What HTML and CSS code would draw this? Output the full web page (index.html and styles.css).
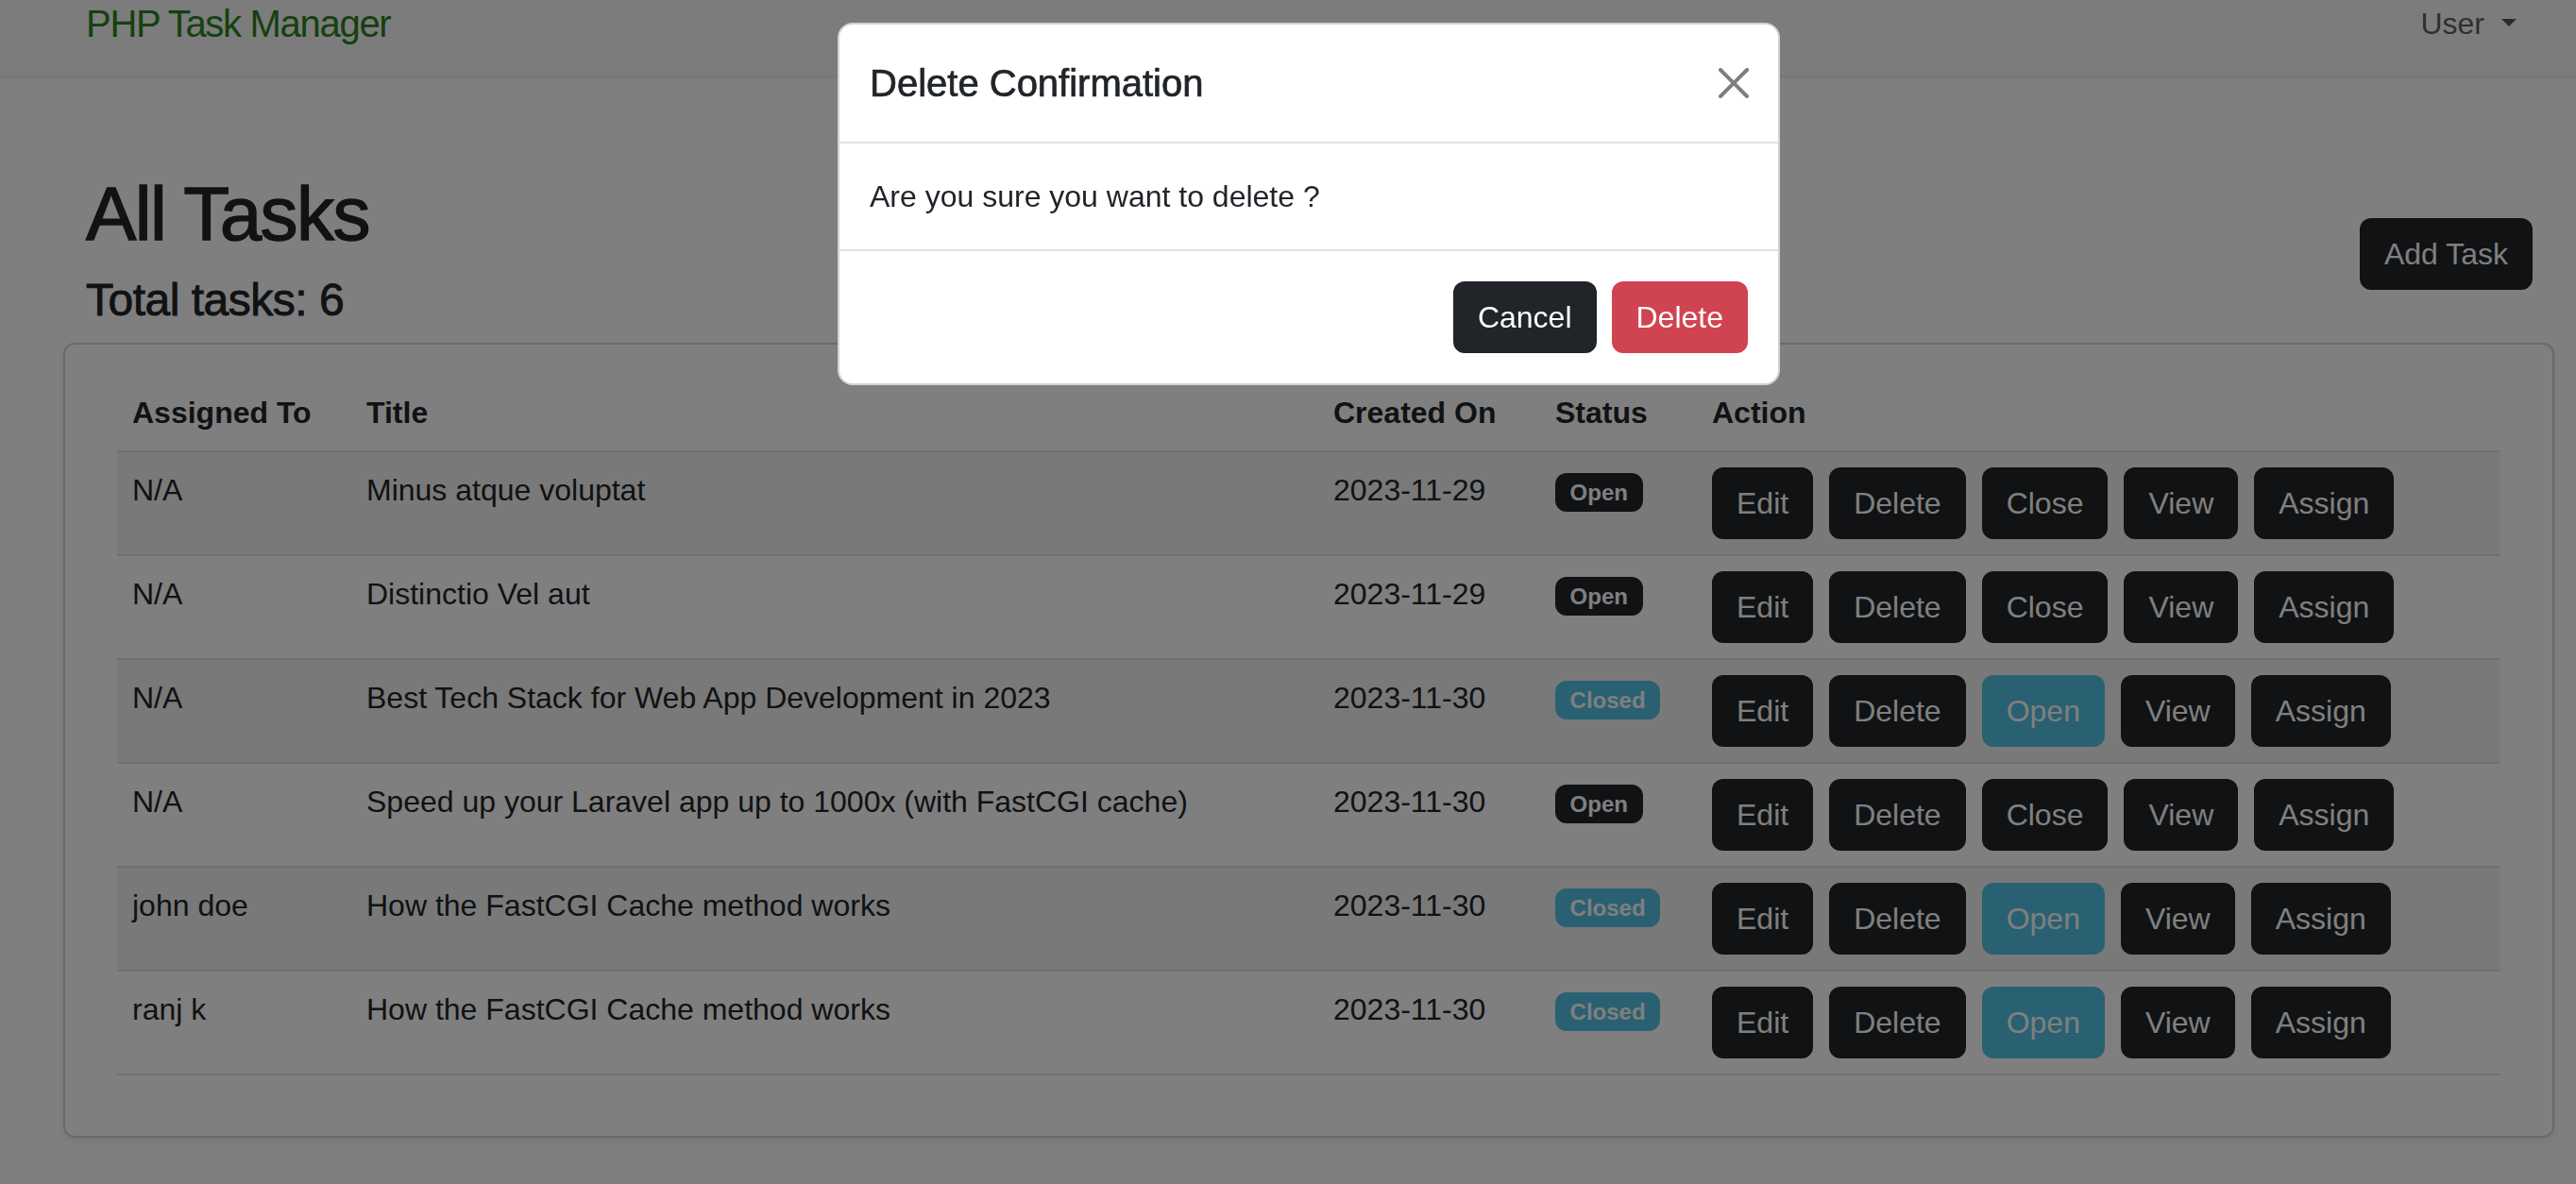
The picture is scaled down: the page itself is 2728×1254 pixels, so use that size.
FILE: index.html
```html
<!DOCTYPE html>
<html lang="en">
<head>
<meta charset="utf-8">
<title>PHP Task Manager</title>
<link rel="stylesheet" href="styles.css">
</head>
<body>
<nav class="navbar">
  <a class="brand" href="#">PHP Task Manager</a>
  <a class="nav-user" href="#">User<span class="caret"></span></a>
</nav>
<main class="main">
  <div class="page-head">
    <div class="head-text">
      <h1 class="page-title">All Tasks</h1>
      <h4 class="page-count">Total tasks: 6</h4>
    </div>
    <button class="btn btn-dark add-btn">Add Task</button>
  </div>
  <div class="card">
    <table class="table">
      <colgroup>
        <col class="c-assigned">
        <col class="c-title">
        <col class="c-created">
        <col class="c-status">
        <col class="c-action">
      </colgroup>
      <thead>
        <tr><th>Assigned To</th><th>Title</th><th>Created On</th><th>Status</th><th>Action</th></tr>
      </thead>
      <tbody>
        <tr>
          <td>N/A</td><td>Minus atque voluptat</td><td>2023-11-29</td>
          <td><span class="badge bg-dark">Open</span></td>
          <td><div class="actions"><button class="btn btn-dark">Edit</button><button class="btn btn-dark">Delete</button><button class="btn btn-dark">Close</button><button class="btn btn-dark">View</button><button class="btn btn-dark">Assign</button></div></td>
        </tr>
        <tr>
          <td>N/A</td><td>Distinctio Vel aut</td><td>2023-11-29</td>
          <td><span class="badge bg-dark">Open</span></td>
          <td><div class="actions"><button class="btn btn-dark">Edit</button><button class="btn btn-dark">Delete</button><button class="btn btn-dark">Close</button><button class="btn btn-dark">View</button><button class="btn btn-dark">Assign</button></div></td>
        </tr>
        <tr>
          <td>N/A</td><td>Best Tech Stack for Web App Development in 2023</td><td>2023-11-30</td>
          <td><span class="badge bg-info">Closed</span></td>
          <td><div class="actions"><button class="btn btn-dark">Edit</button><button class="btn btn-dark">Delete</button><button class="btn btn-info">Open</button><button class="btn btn-dark">View</button><button class="btn btn-dark">Assign</button></div></td>
        </tr>
        <tr>
          <td>N/A</td><td>Speed up your Laravel app up to 1000x (with FastCGI cache)</td><td>2023-11-30</td>
          <td><span class="badge bg-dark">Open</span></td>
          <td><div class="actions"><button class="btn btn-dark">Edit</button><button class="btn btn-dark">Delete</button><button class="btn btn-dark">Close</button><button class="btn btn-dark">View</button><button class="btn btn-dark">Assign</button></div></td>
        </tr>
        <tr>
          <td>john doe</td><td>How the FastCGI Cache method works</td><td>2023-11-30</td>
          <td><span class="badge bg-info">Closed</span></td>
          <td><div class="actions"><button class="btn btn-dark">Edit</button><button class="btn btn-dark">Delete</button><button class="btn btn-info">Open</button><button class="btn btn-dark">View</button><button class="btn btn-dark">Assign</button></div></td>
        </tr>
        <tr>
          <td>ranj k</td><td>How the FastCGI Cache method works</td><td>2023-11-30</td>
          <td><span class="badge bg-info">Closed</span></td>
          <td><div class="actions"><button class="btn btn-dark">Edit</button><button class="btn btn-dark">Delete</button><button class="btn btn-info">Open</button><button class="btn btn-dark">View</button><button class="btn btn-dark">Assign</button></div></td>
        </tr>
      </tbody>
    </table>
  </div>
</main>

<div class="backdrop"></div>
<div class="modal">
  <div class="modal-dialog">
    <div class="modal-header">
      <h5 class="modal-title">Delete Confirmation</h5>
      <button class="btn-close" aria-label="Close">
        <svg viewBox="0 0 16 16" width="32" height="32"><path d="M.293.293a1 1 0 0 1 1.414 0L8 6.586 14.293.293a1 1 0 1 1 1.414 1.414L9.414 8l6.293 6.293a1 1 0 0 1-1.414 1.414L8 9.414l-6.293 6.293a1 1 0 0 1-1.414-1.414L6.586 8 .293 1.707a1 1 0 0 1 0-1.414z"/></svg>
      </button>
    </div>
    <div class="modal-body">Are you sure you want to delete ?</div>
    <div class="modal-footer">
      <button class="btn btn-dark">Cancel</button>
      <button class="btn btn-danger">Delete</button>
    </div>
  </div>
</div>
</body>
</html>
```

FILE: styles.css
```css
* { box-sizing: border-box; }

html, body {
  margin: 0;
  height: 100%;
}

body {
  font-family: "Liberation Sans", Arial, sans-serif;
  font-size: 32px;
  line-height: 1.5;
  color: #212529;
  background: #fff;
  overflow: hidden;
}

/* navbar */
.navbar {
  display: flex;
  justify-content: space-between;
  align-items: flex-start;
  height: 82px;
  padding: 0 47px 0 91px;
  background: #f8f9fa;
  border-bottom: 2px solid #ececed;
  box-shadow: 0 2px 6px rgba(0, 0, 0, .05);
}

.brand {
  font-size: 40px;
  line-height: 50px;
  color: #2a8220;
  text-decoration: none;
  letter-spacing: -1.3px;
}

.nav-user {
  display: block;
  padding: 1px 16px 0;
  font-size: 32px;
  line-height: 48px;
  color: rgba(0, 0, 0, .65);
  text-decoration: none;
}

.caret {
  display: inline-block;
  margin-left: 18px;
  vertical-align: 8px;
  width: 0;
  height: 0;
  border-top: 8px solid currentColor;
  border-left: 8px solid transparent;
  border-right: 8px solid transparent;
}

/* page */
.main {
  padding: 0 23px 0 67px;
}

.page-head {
  display: flex;
  justify-content: space-between;
  align-items: flex-start;
  padding: 0 23px 0 24px;
  margin-top: 97px;
}

.page-title {
  margin: 0 0 14px;
  font-size: 80px;
  font-weight: 500;
  line-height: 1.2;
  letter-spacing: -1.6px;
  -webkit-text-stroke: 1.4px currentColor;
}

.page-count {
  margin: 0;
  font-size: 48px;
  font-weight: 500;
  line-height: 1.2;
  letter-spacing: -0.5px;
  -webkit-text-stroke: 0.9px currentColor;
}

.add-btn {
  margin-top: 52px;
}

/* card + table */
.card {
  margin-top: 16px;
  background: #fff;
  border: 2px solid rgba(0, 0, 0, .175);
  border-radius: 12px;
  padding: 32px 55px 64px;
  box-shadow: 0 4px 8px rgba(0, 0, 0, .075);
}

.table {
  width: 100%;
  border-collapse: collapse;
  table-layout: fixed;
}

.c-assigned { width: 248px; }
.c-title { width: 1024px; }
.c-created { width: 235px; }
.c-status { width: 166px; }

.table th,
.table td {
  padding: 16px;
  text-align: left;
  vertical-align: top;
  border-bottom: 2px solid #dee2e6;
  white-space: nowrap;
}

.table th {
  font-weight: 700;
}

.table tbody tr:nth-child(odd) td {
  background: #f2f2f2;
}

.badge {
  display: inline-block;
  padding: 8.4px 15.6px;
  font-size: 24px;
  font-weight: 700;
  line-height: 1;
  color: #fff;
  border-radius: 12px;
  vertical-align: baseline;
}

.bg-dark { background: #212529; }
.bg-info { background: #52c2e4; }

.actions {
  display: flex;
  gap: 17px;
}

/* buttons */
.btn {
  display: inline-block;
  font-family: inherit;
  font-size: 32px;
  line-height: 48px;
  padding: 12px 24px;
  border: 2px solid transparent;
  border-radius: 12px;
  color: #fff;
  cursor: pointer;
  white-space: nowrap;
}

.btn-dark { background: #212529; border-color: #212529; }
.btn-info { background: #52c2e4; border-color: #52c2e4; }
.btn-danger { background: #d04451; border-color: #d04451; }

/* modal */
.backdrop {
  position: fixed;
  inset: 0;
  background: rgba(0, 0, 0, .5);
  z-index: 10;
}

.modal {
  position: fixed;
  inset: 0;
  z-index: 20;
  display: flex;
  justify-content: center;
  align-items: flex-start;
  padding: 24px 0 0 44px;
}

.modal-dialog {
  width: 998px;
  background: #fff;
  border: 2px solid rgba(0, 0, 0, .175);
  border-radius: 16px;
}

.modal-header {
  display: flex;
  align-items: center;
  padding: 32px;
  border-bottom: 2px solid #dee2e6;
}

.modal-title {
  margin: 0;
  font-size: 40px;
  font-weight: 500;
  line-height: 1.5;
  -webkit-text-stroke: 0.7px currentColor;
}

.btn-close {
  margin-left: auto;
  margin-right: -1px;
  width: 32px;
  height: 32px;
  padding: 0;
  border: 0;
  background: none;
  opacity: .5;
  cursor: pointer;
}

.btn-close svg {
  display: block;
  fill: #000;
}

.modal-body {
  padding: 32px;
}

.modal-footer {
  display: flex;
  justify-content: flex-end;
  gap: 16px;
  padding: 32px;
  border-top: 2px solid #dee2e6;
}
```
